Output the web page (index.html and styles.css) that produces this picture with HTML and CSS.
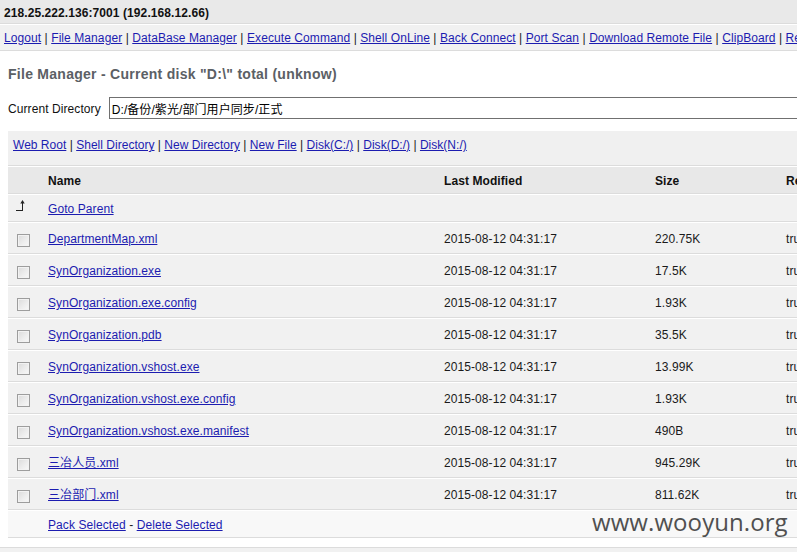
FILE: index.html
```html
<!DOCTYPE html>
<html>
<head>
<meta charset="utf-8">
<title>File Manager</title>
<link rel="stylesheet" href="styles.css">
</head>
<body>
<div class="page">
  <div class="topbar">218.25.222.136:7001 (192.168.12.66)</div>
  <div class="nav"><a href="#">Logout</a> | <a href="#">File Manager</a> | <a href="#">DataBase Manager</a> | <a href="#">Execute Command</a> | <a href="#">Shell OnLine</a> | <a href="#">Back Connect</a> | <a href="#">Port Scan</a> | <a href="#">Download Remote File</a> | <a href="#">ClipBoard</a> | <a href="#">Remote Control</a> | <a href="#">Port Map</a> | <a href="#">JSP Env</a></div>
  <div class="content">
    <h2 class="title">File Manager - Current disk "D:\" total (unknow)</h2>
    <div class="dirrow">
      <span class="dirlabel">Current Directory</span>
      <input class="dirinput" type="text" value="D:/备份/紫光/部门用户同步/正式">
    </div>
    <table class="files">
      <colgroup>
        <col class="c1"><col class="c2"><col class="c3"><col class="c4"><col class="c5"><col>
      </colgroup>
      <tr class="links"><td colspan="6"><a href="#">Web Root</a> | <a href="#">Shell Directory</a> | <a href="#">New Directory</a> | <a href="#">New File</a> | <a href="#">Disk(C:/)</a> | <a href="#">Disk(D:/)</a> | <a href="#">Disk(N:/)</a></td></tr>
      <tr class="head"><td>&nbsp;</td><td>Name</td><td>Last Modified</td><td>Size</td><td>Read/Write/Hidden</td><td>Action</td></tr>
      <tr class="parent"><td class="arrowcell"><svg class="uparrow" width="9" height="12" viewBox="0 0 9 12"><polygon points="6.5,0 4.3,3.6 8.7,3.6" fill="#222"/><rect x="6" y="2" width="1" height="9" fill="#222"/><rect x="0" y="10" width="7" height="1" fill="#222"/></svg></td><td><a href="#">Goto Parent</a></td><td></td><td></td><td></td><td></td></tr>
      <tr class="row"><td class="chkcell"><span class="chk"></span></td><td><a href="#">DepartmentMap.xml</a></td><td>2015-08-12 04:31:17</td><td>220.75K</td><td>true / true / false</td><td></td></tr>
      <tr class="row"><td class="chkcell"><span class="chk"></span></td><td><a href="#">SynOrganization.exe</a></td><td>2015-08-12 04:31:17</td><td>17.5K</td><td>true / true / false</td><td></td></tr>
      <tr class="row"><td class="chkcell"><span class="chk"></span></td><td><a href="#">SynOrganization.exe.config</a></td><td>2015-08-12 04:31:17</td><td>1.93K</td><td>true / true / false</td><td></td></tr>
      <tr class="row"><td class="chkcell"><span class="chk"></span></td><td><a href="#">SynOrganization.pdb</a></td><td>2015-08-12 04:31:17</td><td>35.5K</td><td>true / true / false</td><td></td></tr>
      <tr class="row"><td class="chkcell"><span class="chk"></span></td><td><a href="#">SynOrganization.vshost.exe</a></td><td>2015-08-12 04:31:17</td><td>13.99K</td><td>true / true / false</td><td></td></tr>
      <tr class="row"><td class="chkcell"><span class="chk"></span></td><td><a href="#">SynOrganization.vshost.exe.config</a></td><td>2015-08-12 04:31:17</td><td>1.93K</td><td>true / true / false</td><td></td></tr>
      <tr class="row"><td class="chkcell"><span class="chk"></span></td><td><a href="#">SynOrganization.vshost.exe.manifest</a></td><td>2015-08-12 04:31:17</td><td>490B</td><td>true / true / false</td><td></td></tr>
      <tr class="row"><td class="chkcell"><span class="chk"></span></td><td><a href="#">三冶人员.xml</a></td><td>2015-08-12 04:31:17</td><td>945.29K</td><td>true / true / false</td><td></td></tr>
      <tr class="row"><td class="chkcell"><span class="chk"></span></td><td><a href="#">三冶部门.xml</a></td><td>2015-08-12 04:31:17</td><td>811.62K</td><td>true / true / false</td><td></td></tr>
      <tr class="pack"><td>&nbsp;</td><td colspan="5"><a href="#">Pack Selected</a> - <a href="#">Delete Selected</a></td></tr>
    </table>
  </div>
  <div class="footer">&nbsp;</div>
  <div class="watermark">www.wooyun.org</div>
</div>
</body>
</html>
```

FILE: styles.css
```css
html, body {
  margin: 0;
  padding: 0;
  overflow: hidden;
  background: #fff;
}
body {
  font: 12px/16px "Liberation Sans", Arial, "Noto Sans CJK SC", sans-serif;
  letter-spacing: 0.08px;
  color: #111;
}
.page {
  width: 1200px;
  position: relative;
}
a {
  color: #1c1cb0;
  text-decoration: underline;
}
.topbar {
  height: 18px;
  padding: 5px 0 0 4px;
  background: #e9e9e9;
  border-bottom: 1px solid #dcdcdc;
  font-weight: bold;
  color: #111;
  white-space: nowrap;
}
.nav {
  padding: 5px 0 4px 4px;
  background: #f1f1f1;
  border-top: 1px solid #fff;
  border-bottom: 1px solid #dcdcdc;
  white-space: nowrap;
  color: #222;
}
.content {
  padding-left: 8px;
}
.title {
  margin: 11px 0 0;
  padding: 0;
  height: 24px;
  font-size: 14px;
  line-height: 24px;
  font-weight: bold;
  letter-spacing: 0.27px;
  color: #5b6065;
}
.dirrow {
  margin-top: 11px;
  display: flex;
  align-items: center;
  height: 22px;
  white-space: nowrap;
}
.dirlabel {
  position: relative;
  top: 1px;
}
.dirinput {
  margin-left: 8px;
  box-sizing: border-box;
  height: 22px;
  width: 1100px;
  padding: 1px 2px 0;
  border: 1px solid #707070;
  background: #fff;
  font: 12px "Liberation Sans", Arial, "Noto Sans CJK SC", sans-serif;
  letter-spacing: 0.08px;
  color: #000;
  outline: none;
}
.files {
  margin-top: 11px;
  border-collapse: separate;
  border-spacing: 0;
  table-layout: fixed;
  width: 1180px;
}
.c1 { width: 35px; }
.c2 { width: 396px; }
.c3 { width: 211px; }
.c4 { width: 131px; }
.c5 { width: 200px; }
.files td {
  border-top: 1px solid #fff;
  border-bottom: 1px solid #dcdcdc;
  background: #f1f1f1;
  padding: 6px 10px 4px 5px;
  white-space: nowrap;
  overflow: hidden;
  vertical-align: top;
  color: #1a1a1a;
}
.links td {
  padding: 6px 5px 12px 5px;
  background: #f0f0f0;
  color: #222;
  letter-spacing: 0.02px;
}
.head td {
  background: #e8e8e8;
  font-weight: bold;
  padding-top: 6px;
  padding-bottom: 4px;
  color: #111;
}
.row td {
  padding-top: 8px;
  padding-bottom: 6px;
}
.files .chkcell {
  padding: 11px 0 6px 9px;
}
.chk {
  display: block;
  box-sizing: border-box;
  width: 13px;
  height: 13px;
  border: 1px solid #9d9d9d;
  background: linear-gradient(135deg, #dadada 0%, #eeeeee 60%, #f8f8f8 100%);
  box-shadow: inset 0 0 0 1px #f2f2f2;
}
.files .arrowcell {
  padding: 5px 0 0 8px;
}
.uparrow {
  display: block;
}
.pack td {
  background: #f8f8f8;
}
.footer {
  margin-top: 9px;
  height: 20px;
  background: #f1f1f1;
  border-top: 1px solid #dcdcdc;
}
.watermark {
  position: absolute;
  left: 592px;
  top: 507px;
  font: 24px/30px "Open Sans", "DejaVu Sans", sans-serif;
  color: #505050;
  white-space: nowrap;
}
```
